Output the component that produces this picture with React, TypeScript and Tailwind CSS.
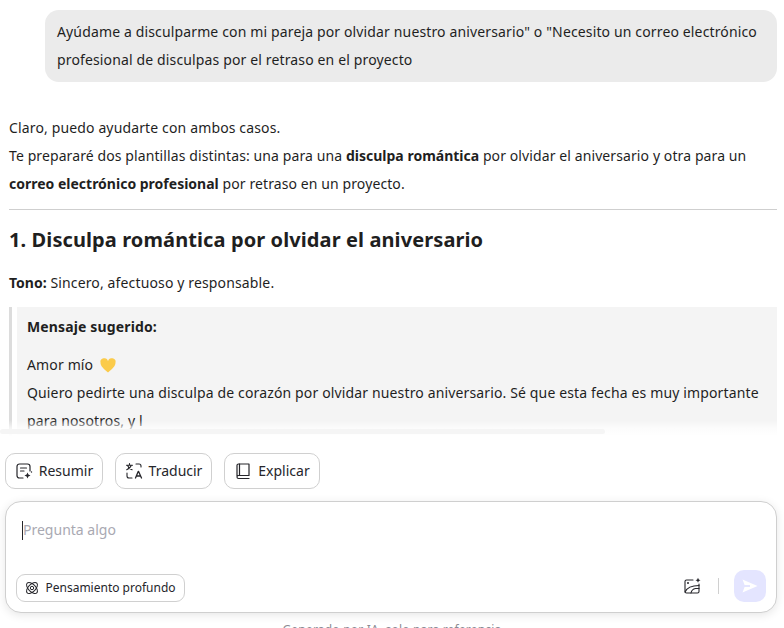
import React from 'react';

const ActionButton: React.FC<{ icon: React.ReactNode; label: string; className: string }> = ({ icon, label, className }) => (
  <button className={`flex h-9 items-center justify-center gap-[6px] rounded-[10px] border border-[#d0d0d0] bg-white text-sm text-[#26262b] ${className}`}>
    {icon}
    <span>{label}</span>
  </button>
);

const SummaryIcon = () => (
  <svg width="18" height="18" viewBox="0 0 18 18" fill="none" stroke="#26262b" strokeWidth="1.2" strokeLinecap="round">
    <path d="M8 16H4.500A2.500 2.500 0 0 1 2 13.500V4.500A2.500 2.500 0 0 1 4.500 2h8A2.500 2.500 0 0 1 15 4.500V9" />
    <path d="M5.500 6h6M5.500 9h3.500" />
    <path d="M12.500 10.500l.9 2.100 2.100.9-2.100.9-.9 2.100-.9-2.100-2.100-.9 2.100-.9z" fill="#26262b" stroke="none" />
    <circle cx="16.500" cy="10" r=".7" fill="#26262b" stroke="none" />
  </svg>
);

const TranslateIcon = () => (
  <svg width="18" height="18" viewBox="0 0 18 18" fill="none" stroke="#26262b" strokeWidth="1.1" strokeLinecap="round" strokeLinejoin="round">
    <path d="M1.500 3.200h6M4.500 1.500v1.700M6.300 3.200c-.5 2-2.200 3.600-4.600 4.600M2.700 3.800c.7 1.800 2.200 3.200 4.400 4" />
    <path d="M11 2h3a2 2 0 0 1 2 2v1" />
    <path d="M7 16H4a2 2 0 0 1-2-2v-3" />
    <path d="M10.500 16l2.700-6.500h.4L16.500 16M11.500 14h4" strokeWidth="1.300" />
  </svg>
);

const BookIcon = () => (
  <svg width="18" height="18" viewBox="0 0 18 18" fill="none" stroke="#26262b" strokeWidth="1.2" strokeLinecap="round" strokeLinejoin="round">
    <path d="M3 14V3.500A1.500 1.500 0 0 1 4.500 2H15v11.500H4.500A1.500 1.500 0 0 0 3 15a1.500 1.500 0 0 0 1.500 1.500H15" />
    <path d="M5.500 2v11.500" />
  </svg>
);

const AtomIcon = () => (
  <svg width="14" height="14" viewBox="0 0 14 14" fill="none" stroke="#26262b" strokeWidth="1">
    <ellipse cx="7" cy="7" rx="6.800" ry="3.600" transform="rotate(45 7 7)" />
    <ellipse cx="7" cy="7" rx="6.800" ry="3.600" transform="rotate(-45 7 7)" />
    <circle cx="7" cy="7" r="1.700" />
  </svg>
);

const ImageSparkIcon = () => (
  <svg width="18" height="18" viewBox="0 0 18 18" fill="none" stroke="#26262b" strokeWidth="1.100" strokeLinecap="round">
    <path d="M10 3H3.500A1.500 1.500 0 0 0 2 4.500v10A1.500 1.500 0 0 0 3.500 16h11a1.500 1.500 0 0 0 1.500-1.500V7" />
    <path d="M2 15c2-4.500 6-6.500 14-6.500" />
    <path d="M8 16c.5-2.500 2-4 4.500-4.500H16" />
    <circle cx="5" cy="6" r="1" fill="#26262b" stroke="none" />
    <path d="M15 .8l.8 1.700 1.700.8-1.700.8-.8 1.700-.8-1.700-1.700-.8 1.700-.8z" fill="#26262b" stroke="none" />
  </svg>
);

const SendIcon = () => (
  <svg width="16" height="14" viewBox="0 0 16 14" fill="white">
    <path d="M.5.500 15.500 7 .5 13.500 2.600 8H8V6H2.600z" />
  </svg>
);

const HeartIcon = () => (
  <svg width="16" height="15" viewBox="0 0 15 14" className="ml-[7px] inline-block align-[-3px]">
    <path d="M7.500 13.500C3 10 .5 7.500.5 4.500A3.500 3.500 0 0 1 7.500 3a3.500 3.500 0 0 1 7 1.500c0 3-2.500 5.500-7 9z" fill="#fbcb4a" />
  </svg>
);

export default function App() {
  return (
    <div className="relative h-[628px] w-[784px] overflow-hidden bg-white font-['Noto_Sans',sans-serif] text-sm text-[#1f1f1f]">
      <div className="relative h-[436px] overflow-hidden tracking-[0.14px]">
        <div className="pl-[45px] pr-[7px] pt-[10px]">
          <div className="rounded-[14px] bg-[#ebebeb] px-3 py-2 leading-7">
            Ayúdame a disculparme con mi pareja por olvidar nuestro aniversario" o "Necesito un correo electrónico profesional de disculpas por el retraso en el proyecto
          </div>
        </div>

        <div className="pl-[9px] pr-[7px] pt-8 leading-7">
          <p>Claro, puedo ayudarte con ambos casos.</p>
          <p className="tracking-[0.1px]">
            Te prepararé dos plantillas distintas: una para una <strong className="font-bold tracking-normal">disculpa romántica</strong> por olvidar el aniversario y otra para un <strong className="font-bold tracking-normal">correo electrónico profesional</strong> por retraso en un proyecto.
          </p>
          <hr className="mt-[11px] border-[#cfcfcf]" />
          <h2 className="mt-4 text-xl font-bold leading-7 tracking-[0.1px]">1. Disculpa romántica por olvidar el aniversario</h2>
          <p className="mt-[15px]"><strong className="font-bold tracking-normal">Tono:</strong> Sincero, afectuoso y responsable.</p>
          <div className="mt-[10px] flex h-[140px]">
            <div className="w-[3px] bg-[#dcdcdc]" />
            <div className="ml-[5px] flex-1 bg-[#f4f4f4] pl-[10px] pt-[6px]">
              <p className="font-bold">Mensaje sugerido:</p>
              <p className="mt-[10px]">Amor mío<HeartIcon /></p>
              <p>Quiero pedirte una disculpa de corazón por olvidar nuestro aniversario. Sé que esta fecha es muy importante para nosotros, y l</p>
            </div>
          </div>
        </div>

        <div className="absolute inset-x-0 bottom-0 h-4 bg-gradient-to-b from-white/0 via-white/70 to-white" />
        <div className="absolute bottom-[2px] left-0 h-[5px] w-[605px] rounded-full bg-[#f5f5f5]" />
      </div>

      <div className="mt-[17px] flex pl-[5px]">
        <ActionButton icon={<SummaryIcon />} label="Resumir" className="w-[98px]" />
        <ActionButton icon={<TranslateIcon />} label="Traducir" className="ml-3 w-[97px]" />
        <ActionButton icon={<BookIcon />} label="Explicar" className="ml-3 w-[96px]" />
      </div>

      <div className="mx-[5px] mt-3 h-[112px] w-[772px] rounded-2xl border border-[#cfcfcf] bg-white px-[10px] pt-4 shadow-[0_2px_10px_rgba(0,0,0,0.1)]">
        <div className="flex h-6 items-center pl-[6px] text-[#a9a9b2]">
          <span className="h-[19px] w-px bg-[#26262b]" />
          <span>Pregunta algo</span>
        </div>
        <div className="mt-[28px] flex items-end justify-between">
          <button className="flex h-7 w-[169px] items-center justify-center gap-[6px] rounded-[9px] border border-[#d0d0d0] text-xs text-[#26262b]">
            <AtomIcon />
            <span>Pensamiento profundo</span>
          </button>
          <div className="flex items-center">
            <ImageSparkIcon />
            <span className="ml-[17px] h-4 w-px bg-[#d0d0d0]" />
            <button className="ml-[15px] flex h-8 w-8 items-center justify-center rounded-[10px] bg-[#e4e5ff]">
              <SendIcon />
            </button>
          </div>
        </div>
      </div>

      <p className="mt-[9px] text-center text-xs tracking-[0.2px] text-[#8a8a93]">Generado por IA, solo para referencia</p>
    </div>
  );
}
